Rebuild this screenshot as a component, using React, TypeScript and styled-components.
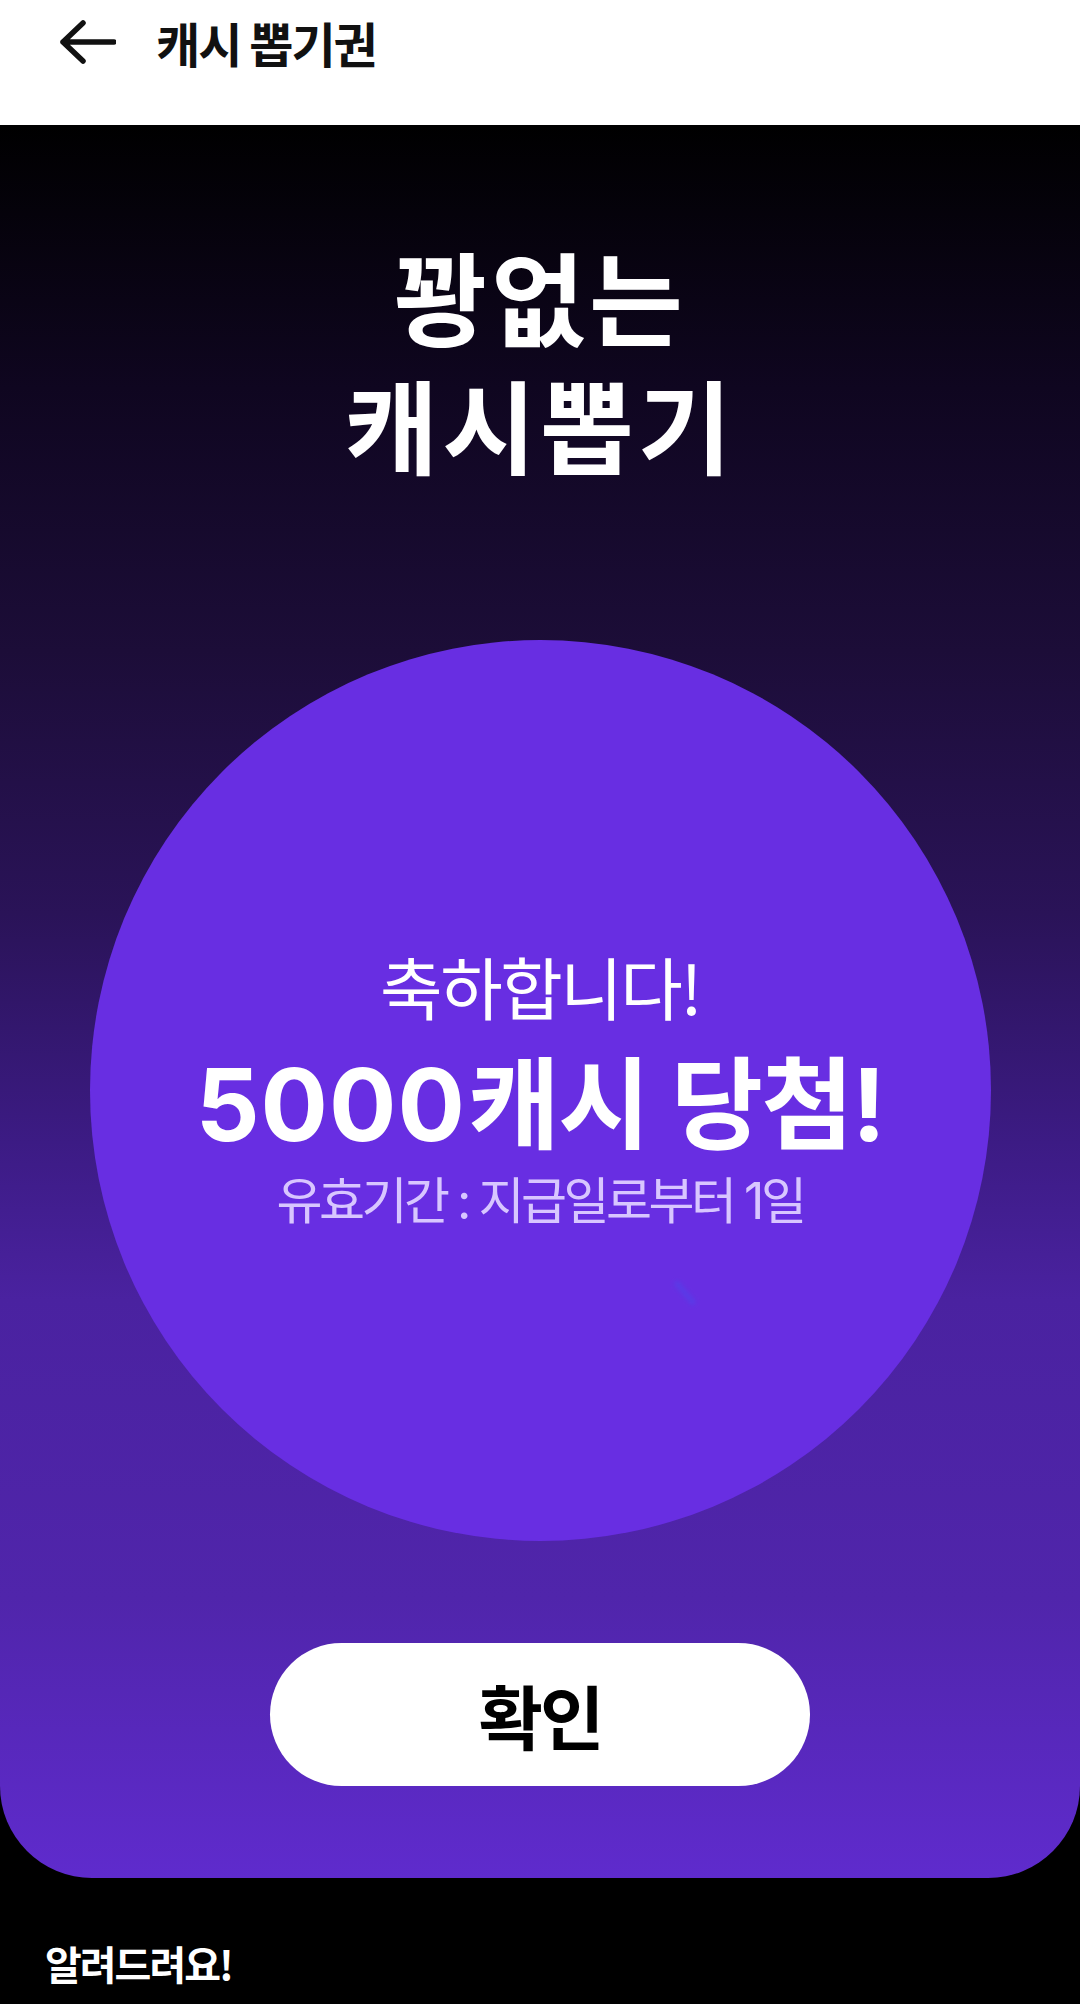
import { styled, createGlobalStyle } from 'styled-components'

const GlobalStyle = createGlobalStyle`
  html, body {
    margin: 0;
    padding: 0;
    background: #000;
  }
  body {
    font-family: 'Noto Sans CJK KR', 'Noto Sans', sans-serif;
    -webkit-font-smoothing: antialiased;
  }
  * {
    box-sizing: border-box;
  }
`

function BackArrow() {
  return (
    <svg width="56" height="44" viewBox="0 0 56 44" fill="none">
      <path
        d="M23 3 L3 22 L23 41 M3 22 H54"
        stroke="#111"
        strokeWidth="5.5"
        strokeLinecap="round"
        strokeLinejoin="round"
      />
    </svg>
  )
}

function App() {
  return (
    <Page>
      <GlobalStyle />
      <Header>
        <BackButton aria-label="뒤로">
          <BackArrow />
        </BackButton>
        <HeaderTitle>캐시 뽑기권</HeaderTitle>
      </Header>

      <Hero>
        <Title>
          <TitleLine>꽝없는</TitleLine>
          <TitleLine>캐시뽑기</TitleLine>
        </Title>

        <ResultCircle>
          <Congrats>축하합니다!</Congrats>
          <Prize>
            <Amount>5000</Amount>캐시 당첨!
          </Prize>
          <Validity>유효기간 : 지급일로부터 1일</Validity>
          <Sparkle />
        </ResultCircle>

        <ConfirmButton>확인</ConfirmButton>
      </Hero>

      <Notice>
        <NoticeTitle>알려드려요!</NoticeTitle>
      </Notice>
    </Page>
  )
}
export default App

const Page = styled.div`
  width: 1080px;
  min-height: 2004px;
  background: #000;
`

const Header = styled.header`
  height: 125px;
  padding: 0 0 41px 60px;
  background: #fff;
  display: flex;
  align-items: center;
  gap: 40px;
`

const BackButton = styled.button`
  border: 0;
  padding: 0;
  background: none;
  display: flex;
  align-items: center;
`

const HeaderTitle = styled.h2`
  margin: 0;
  font-size: 48px;
  font-weight: 700;
  letter-spacing: -2px;
  line-height: 60px;
  color: #111;
`

const Hero = styled.section`
  display: flex;
  flex-direction: column;
  align-items: center;
  padding: 106px 0 92px;
  border-radius: 0 0 92px 92px;
  background: linear-gradient(
    180deg,
    #000000 0%,
    #0f0620 15%,
    #1c0d38 30%,
    #2a1358 45%,
    #3c1b84 58%,
    #4a22a0 67%,
    #5025ab 84%,
    #5f2bcd 100%
  );
`

const Title = styled.h1`
  margin: 0;
  display: flex;
  flex-direction: column;
  align-items: center;
  gap: 0;
  color: #fff;
  font-size: 102px;
  font-weight: 700;
  letter-spacing: 4px;
`

const TitleLine = styled.span`
  display: block;
  height: 128px;
  line-height: 128px;
`

const ResultCircle = styled.div`
  position: relative;
  width: 901px;
  height: 901px;
  margin-top: 153px;
  border-radius: 50%;
  background: #682ee2;
  display: flex;
  flex-direction: column;
  align-items: center;
  justify-content: center;
  color: #fff;
`

const Congrats = styled.p`
  margin: 0;
  font-size: 68px;
  font-weight: 400;
  letter-spacing: -2.5px;
  line-height: 80px;
`

const Prize = styled.p`
  margin: 24px 0 0;
  font-family: Inter, 'Noto Sans CJK KR', sans-serif;
  font-size: 100px;
  font-weight: 700;
  letter-spacing: -1.5px;
  line-height: 110px;
`

const Amount = styled.span`
  letter-spacing: 1px;
  margin-right: 2px;
`

const Validity = styled.p`
  margin: 6px 0 0;
  font-family: Inter, 'Noto Sans CJK KR', sans-serif;
  font-size: 50px;
  font-weight: 400;
  letter-spacing: -3.5px;
  line-height: 70px;
  color: #d8c6ff;
`

const Sparkle = styled.span`
  position: absolute;
  left: 592px;
  top: 638px;
  width: 6px;
  height: 30px;
  border-radius: 3px;
  background: #5a3ae6;
  filter: blur(2px);
  transform: rotate(-40deg);
`

const ConfirmButton = styled.button`
  margin-top: 102px;
  width: 540px;
  height: 143px;
  border: 0;
  border-radius: 72px;
  background: #fff;
  color: #000;
  font-family: inherit;
  font-size: 70px;
  font-weight: 700;
  letter-spacing: -3px;
`

const Notice = styled.section`
  padding: 56px 45px 0;
`

const NoticeTitle = styled.h3`
  margin: 0;
  color: #fff;
  font-size: 40px;
  font-weight: 700;
  letter-spacing: -2px;
`
